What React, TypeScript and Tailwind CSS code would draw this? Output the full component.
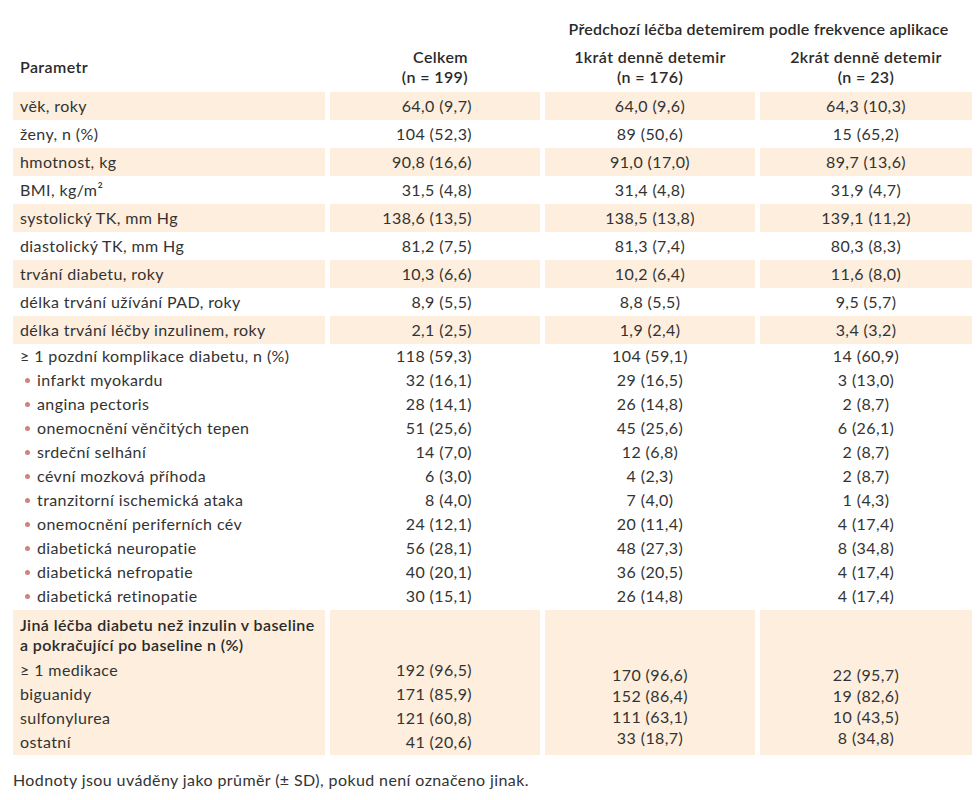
const COLS = 'grid grid-cols-[312px_210px_210px_212px] gap-x-[5px]';

type Row = { label: string; total: string; once: string; twice: string; shaded?: boolean; bullet?: boolean };

const TOP_ROWS: Row[] = [
  { label: 'věk, roky', total: '64,0 (9,7)', once: '64,0 (9,6)', twice: '64,3 (10,3)', shaded: true },
  { label: 'ženy, n (%)', total: '104 (52,3)', once: '89 (50,6)', twice: '15 (65,2)' },
  { label: 'hmotnost, kg', total: '90,8 (16,6)', once: '91,0 (17,0)', twice: '89,7 (13,6)', shaded: true },
  { label: 'BMI, kg/m²', total: '31,5 (4,8)', once: '31,4 (4,8)', twice: '31,9 (4,7)' },
  { label: 'systolický TK, mm Hg', total: '138,6 (13,5)', once: '138,5 (13,8)', twice: '139,1 (11,2)', shaded: true },
  { label: 'diastolický TK, mm Hg', total: '81,2 (7,5)', once: '81,3 (7,4)', twice: '80,3 (8,3)' },
  { label: 'trvání diabetu, roky', total: '10,3 (6,6)', once: '10,2 (6,4)', twice: '11,6 (8,0)', shaded: true },
  { label: 'délka trvání užívání PAD, roky', total: '8,9 (5,5)', once: '8,8 (5,5)', twice: '9,5 (5,7)' },
  { label: 'délka trvání léčby inzulinem, roky', total: '2,1 (2,5)', once: '1,9 (2,4)', twice: '3,4 (3,2)', shaded: true },
];

const COMPLICATIONS: Row[] = [
  { label: '≥ 1 pozdní komplikace diabetu, n (%)', total: '118 (59,3)', once: '104 (59,1)', twice: '14 (60,9)' },
  { label: 'infarkt myokardu', total: '32 (16,1)', once: '29 (16,5)', twice: '3 (13,0)', bullet: true },
  { label: 'angina pectoris', total: '28 (14,1)', once: '26 (14,8)', twice: '2 (8,7)', bullet: true },
  { label: 'onemocnění věnčitých tepen', total: '51 (25,6)', once: '45 (25,6)', twice: '6 (26,1)', bullet: true },
  { label: 'srdeční selhání', total: '14 (7,0)', once: '12 (6,8)', twice: '2 (8,7)', bullet: true },
  { label: 'cévní mozková příhoda', total: '6 (3,0)', once: '4 (2,3)', twice: '2 (8,7)', bullet: true },
  { label: 'tranzitorní ischemická ataka', total: '8 (4,0)', once: '7 (4,0)', twice: '1 (4,3)', bullet: true },
  { label: 'onemocnění periferních cév', total: '24 (12,1)', once: '20 (11,4)', twice: '4 (17,4)', bullet: true },
  { label: 'diabetická neuropatie', total: '56 (28,1)', once: '48 (27,3)', twice: '8 (34,8)', bullet: true },
  { label: 'diabetická nefropatie', total: '40 (20,1)', once: '36 (20,5)', twice: '4 (17,4)', bullet: true },
  { label: 'diabetická retinopatie', total: '30 (15,1)', once: '26 (14,8)', twice: '4 (17,4)', bullet: true },
];

const OTHER = [
  { label: '≥ 1 medikace', total: '192 (96,5)', once: '170 (96,6)', twice: '22 (95,7)' },
  { label: 'biguanidy', total: '171 (85,9)', once: '152 (86,4)', twice: '19 (82,6)' },
  { label: 'sulfonylurea', total: '121 (60,8)', once: '111 (63,1)', twice: '10 (43,5)' },
  { label: 'ostatní', total: '41 (20,6)', once: '33 (18,7)', twice: '8 (34,8)' },
];

function DataRow({ row, height }: { row: Row; height: string }) {
  const bg = row.shaded ? 'bg-[#fdeedd]' : '';
  return (
    <div className={`${COLS} ${height}`}>
      <div className={`${bg} flex items-center ${row.bullet ? 'pl-[12px]' : 'pl-[7px]'}`}>
        {row.bullet && <span className="w-[5px] h-[5px] rounded-full bg-[#c9877b] mr-[7px] shrink-0" />}
        {row.label}
      </div>
      <div className={`${bg} flex items-center justify-end pr-[68px]`}>{row.total}</div>
      <div className={`${bg} flex items-center justify-center`}>{row.once}</div>
      <div className={`${bg} flex items-center justify-center`}>{row.twice}</div>
    </div>
  );
}

export default function App() {
  return (
    <div className="w-[978px] h-[800px] bg-white pl-[13px] pt-[18px] text-[16px] tracking-[0.4px] text-[#333] font-['Lato','Open_Sans',sans-serif]">
      {/* header */}
      <div className={`${COLS} h-[22px] leading-[22px] font-semibold text-[#2a2a2a]`}>
        <div className="col-start-3 col-span-2 text-center tracking-[0.2px]">Předchozí léčba detemirem podle frekvence aplikace</div>
      </div>
      <div className={`${COLS} mt-[7px] mb-[5px] leading-5 font-semibold text-[#2a2a2a]`}>
        <div className="flex items-center pl-[7px]">Parametr</div>
        <div className="text-right pr-[72px]">
          <div>Celkem</div>
          <div>(n = 199)</div>
        </div>
        <div className="text-center">
          <div>1krát denně detemir</div>
          <div>(n = 176)</div>
        </div>
        <div className="text-center">
          <div>2krát denně detemir</div>
          <div>(n = 23)</div>
        </div>
      </div>

      {TOP_ROWS.map((r) => (
        <DataRow key={r.label} row={r} height="h-7" />
      ))}
      {COMPLICATIONS.map((r) => (
        <DataRow key={r.label} row={r} height="h-6" />
      ))}

      {/* other treatment block */}
      <div className={`${COLS} mt-[2px] h-[145px]`}>
        <div className="bg-[#fdeedd] pl-[7px] pt-[5px]">
          <div className="font-semibold text-[#2a2a2a] leading-5">
            <div>Jiná léčba diabetu než inzulin v baseline</div>
            <div>a pokračující po baseline n (%)</div>
          </div>
          <div className="mt-[3px] leading-6">
            {OTHER.map((o) => (
              <div key={o.label}>{o.label}</div>
            ))}
          </div>
        </div>
        <div className="bg-[#fdeedd] pt-[48px] pr-[68px] text-right leading-6">
          {OTHER.map((o) => (
            <div key={o.label}>{o.total}</div>
          ))}
        </div>
        <div className="bg-[#fdeedd] pt-[54px] text-center leading-[21px]">
          {OTHER.map((o) => (
            <div key={o.label}>{o.once}</div>
          ))}
        </div>
        <div className="bg-[#fdeedd] pt-[54px] text-center leading-[21px]">
          {OTHER.map((o) => (
            <div key={o.label}>{o.twice}</div>
          ))}
        </div>
      </div>

      <p className="mt-[15px] leading-5">Hodnoty jsou uváděny jako průměr (± SD), pokud není označeno jinak.</p>
    </div>
  );
}
